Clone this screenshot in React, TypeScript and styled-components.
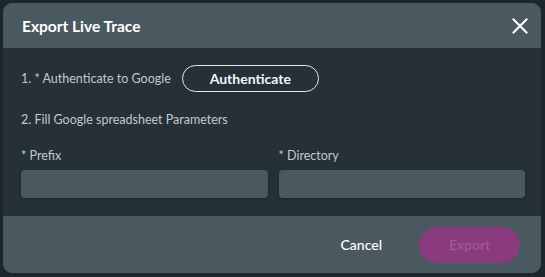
import { createGlobalStyle } from 'styled-components';
import styled from 'styled-components';

const GlobalStyle = createGlobalStyle`
	html, body {
		margin: 0;
		padding: 0;
		background: #1f262b;
		font-family: Lato, 'Open Sans', sans-serif;
	}
	* {
		box-sizing: border-box;
	}
`;

const Page = styled.div`
	width: 545px;
	height: 277px;
	padding: 3px 4px 4px 3px;
`;

const Modal = styled.div`
	display: flex;
	flex-direction: column;
	width: 538px;
	height: 270px;
	border-radius: 9px;
	overflow: hidden;
	background: #263037;
`;

const Header = styled.div`
	display: flex;
	align-items: center;
	justify-content: space-between;
	height: 45px;
	padding: 0 10px 0 19px;
	background: #4a5960;
`;

const Title = styled.h1`
	margin: 0;
	font-size: 15.5px;
	font-weight: 700;
	color: #ffffff;
`;

const CloseButton = styled.button`
	display: flex;
	align-items: center;
	justify-content: center;
	width: 22px;
	height: 22px;
	padding: 0;
	border: none;
	background: none;
	cursor: pointer;
`;

const Body = styled.div`
	flex: 1;
	display: flex;
	flex-direction: column;
	padding: 17px 16px 0 18px;
`;

const StepRow = styled.div`
	display: flex;
	align-items: center;
	gap: 11px;
	height: 27px;
`;

const StepText = styled.div<{ $top?: number }>`
	margin-top: ${(p) => p.$top ?? 0}px;
	font-size: 12.5px;
	line-height: 16px;
	color: #c3c8cb;
`;

const OutlineButton = styled.button`
	width: 137px;
	height: 27px;
	border: 1px solid #e6e8ea;
	border-radius: 14px;
	background: transparent;
	color: #f4f5f6;
	font-family: inherit;
	font-size: 14px;
	font-weight: 700;
	cursor: pointer;
`;

const Fields = styled.div`
	display: grid;
	grid-template-columns: 1fr 1fr;
	gap: 11px;
	margin-top: 20px;
`;

const Field = styled.label`
	display: flex;
	flex-direction: column;
	gap: 6px;
`;

const FieldLabel = styled.span`
	font-size: 12.5px;
	line-height: 16px;
	color: #c3c8cb;
`;

const Input = styled.input`
	height: 28px;
	border: none;
	border-radius: 4px;
	background: #4a5960;
	color: #ffffff;
	font-family: inherit;
	font-size: 13px;
	padding: 0 8px;
	outline: none;
	box-shadow: 0 1px 3px rgba(0, 0, 0, 0.25);
`;

const Footer = styled.div`
	display: flex;
	align-items: center;
	justify-content: flex-end;
	gap: 23px;
	height: 57px;
	padding: 0 21px 0 0;
	background: #4a5960;
`;

const TextButton = styled.button`
	padding: 0 14px;
	border: none;
	background: none;
	color: #ffffff;
	font-family: inherit;
	font-size: 14px;
	font-weight: 500;
	cursor: pointer;
`;

const PrimaryButton = styled.button`
	width: 101px;
	height: 36px;
	border: none;
	border-radius: 18px;
	background: #893b7d;
	color: #a3589a;
	font-family: inherit;
	font-size: 14px;
	font-weight: 500;
	cursor: not-allowed;
`;

export default function App() {
	return (
		<>
			<GlobalStyle />
			<Page>
				<Modal>
					<Header>
						<Title>Export Live Trace</Title>
						<CloseButton aria-label='Close'>
							<svg width='16' height='16' viewBox='0 0 16 16'>
								<path d='M1.5 1.5 L14.5 14.5 M14.5 1.5 L1.5 14.5' stroke='#ffffff' strokeWidth='2' strokeLinecap='square' />
							</svg>
						</CloseButton>
					</Header>
					<Body>
						<StepRow>
							<StepText>1. * Authenticate to Google</StepText>
							<OutlineButton>Authenticate</OutlineButton>
						</StepRow>
						<StepText $top={20}>2. Fill Google spreadsheet Parameters</StepText>
						<Fields>
							<Field>
								<FieldLabel>* Prefix</FieldLabel>
								<Input />
							</Field>
							<Field>
								<FieldLabel>* Directory</FieldLabel>
								<Input />
							</Field>
						</Fields>
					</Body>
					<Footer>
						<TextButton>Cancel</TextButton>
						<PrimaryButton disabled>Export</PrimaryButton>
					</Footer>
				</Modal>
			</Page>
		</>
	);
}
